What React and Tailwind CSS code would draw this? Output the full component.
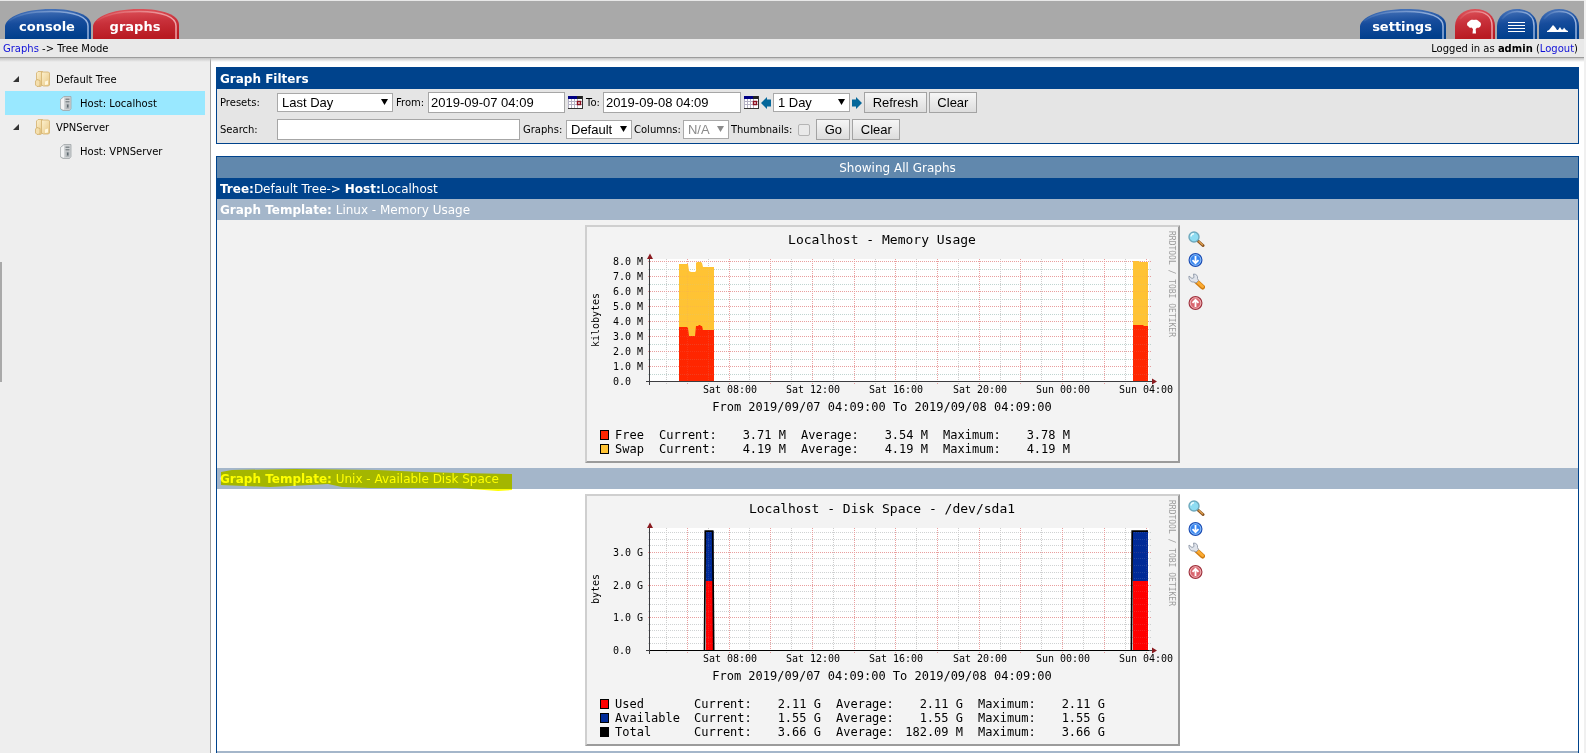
const TAB_COLORS = {
  blue: { top: "#4d78bc", mid: "#164c9c", bottom: "#003f8c", shine: "#a8c0e6" },
  red: { top: "#e0575e", mid: "#c8303a", bottom: "#b91b22", shine: "#f3b0b3" },
};

const tree = [
  { name: "Default Tree", hosts: [{ name: "Host: Localhost", active: true }] },
  { name: "VPNServer", hosts: [{ name: "Host: VPNServer", active: false }] },
];

const HOUR_LINES = Array.from({ length: 24 }, (_, i) => Math.round(81 + i * 20.85) + 0.5);

const TIME_LABELS = [
  { x: 145, text: "Sat 08:00" },
  { x: 228, text: "Sat 12:00" },
  { x: 311, text: "Sat 16:00" },
  { x: 395, text: "Sat 20:00" },
  { x: 478, text: "Sun 00:00" },
  { x: 561, text: "Sun 04:00" },
];

const memoryGraph = {
  title: "Localhost - Memory Usage",
  unit: "kilobytes",
  height: 238,
  step: 15,
  minor: 2,
  minorCount: 16,
  minorColor: "#b4cdc8",
  yLabels: ["0.0", "1.0 M", "2.0 M", "3.0 M", "4.0 M", "5.0 M", "6.0 M", "7.0 M", "8.0 M"],
  shift: 0,
  areas: [
    { color: "#ffc334", d: "M94 156V39h9l1 7 2 1h4l1-1V38l1-1h4l1 1 1 4h11v114z" },
    { color: "#ff2600", d: "M94 156v-54h8l1 1 1 8h6l1-10h2l1-1h1l1 1h1l1 4h11v51z" },
    { color: "#ffc334", d: "M548 156V36h6l1 1h8v119z" },
    { color: "#ff2600", d: "M548 156v-56h10l1 1h4v55z" },
  ],
  legend: [
    { color: "#ff2600", name: "Free", values: ["3.71 M", "3.54 M", "3.78 M"] },
    { color: "#ffc334", name: "Swap", values: ["4.19 M", "4.19 M", "4.19 M"] },
  ],
};

const diskGraph = {
  title: "Localhost - Disk Space - /dev/sda1",
  unit: "bytes",
  height: 252,
  step: 32.7,
  minor: 5,
  minorCount: 18,
  minorColor: "#c6cacb",
  yLabels: ["0.0", "1.0 G", "2.0 G", "3.0 G"],
  shift: 35,
  areas: [
    { color: "#002a97", d: "M120.5 87V37h8v50zM547.5 87V37h15.5v50z" },
    { color: "#ff0000", d: "M121 156V87h7v69zM548 156V87h15v69z" },
  ],
  line: "M119.5 156.5L120.3 37.2H127.7L128.700 156.5M546.400 156.5L547.2 37.2H563",
  legend: [
    { color: "#ff0000", name: "Used", values: ["2.11 G", "2.11 G", "2.11 G"] },
    { color: "#002a97", name: "Available", values: ["1.55 G", "1.55 G", "1.55 G"] },
    { color: "#000000", name: "Total", values: ["3.66 G", "182.09 M", "3.66 G"] },
  ],
};

function TabShape({ color, width }) {
  const c = TAB_COLORS[color];
  const id = `tab-${color}-${width}`;
  const wide = width > 50;
  const outline = wide
    ? "M0 30V17C1 9 17 0 46 0C70 0 86 6 86 16V30Z"
    : "M0 30V17C0 7 9 0 20 0C32 0 40 7 40 17V30Z";
  const shine = wide
    ? "M4 12C14 4 30 2.5 46 2.5C70 2.5 83 8 83 17V30"
    : "M5 10C9 5 14 2.5 20 2.5C31 2.5 37 8 37 17V30";

  return (
    <svg className="absolute inset-0" width={width} height="30" aria-hidden="true">
      <defs>
        <linearGradient id={id} x1="0" y1="0" x2="0.15" y2="1">
          <stop offset="0" stopColor={c.top} />
          <stop offset="0.5" stopColor={c.mid} />
          <stop offset="1" stopColor={c.bottom} />
        </linearGradient>
        <linearGradient id={`${id}-shine`} x1="0" y1="0" x2="1" y2="0">
          <stop offset="0" stopColor={c.shine} stopOpacity="0.1" />
          <stop offset="0.6" stopColor={c.shine} stopOpacity="0.6" />
          <stop offset="1" stopColor={c.shine} stopOpacity="0.9" />
        </linearGradient>
      </defs>
      <path d={outline} fill={`url(#${id})`} />
      <path d={shine} fill="none" stroke={`url(#${id}-shine)`} strokeWidth="1.5" />
    </svg>
  );
}

function Tab({ color, children }) {
  return (
    <a href="#" className="relative block h-[30px] w-[86px]">
      <TabShape color={color} width={86} />
      <span className="relative block pt-[8px] pr-[2px] text-center text-[13px] leading-[20px] font-bold text-white">
        {children}
      </span>
    </a>
  );
}

function IconTab({ color, label, children }) {
  return (
    <a href="#" aria-label={label} className="relative block h-[30px] w-[40px]">
      <TabShape color={color} width={40} />
      <svg className="absolute inset-0" width="40" height="30" fill="#fff" aria-hidden="true">
        {children}
      </svg>
    </a>
  );
}

function FolderIcon() {
  return (
    <svg width="16" height="16" viewBox="0 0 16 16" aria-hidden="true">
      <defs>
        <linearGradient id="folder" x1="0" y1="0" x2="1" y2="1">
          <stop offset="0" stopColor="#fdf1cf" />
          <stop offset="1" stopColor="#e8c885" />
        </linearGradient>
      </defs>
      <path d="M1.5 2L3 .5h4.5V14l-2 1.5-4-1z" fill="url(#folder)" stroke="#d3b06c" strokeWidth="0.8" />
      <path d="M6.5 1h7l1 1v12l-1 1h-5l-2-1z" fill="url(#folder)" stroke="#d3b06c" strokeWidth="0.8" />
      <path d="M.5 10l1.5-1.500 3 1V15l-3 .5L.5 14z" fill="#f4dfae" stroke="#cfa95f" strokeWidth="0.7" />
      <path d="M10 10.500l3-1v4l-3 .5z" fill="#fff7df" />
    </svg>
  );
}

function ServerIcon() {
  return (
    <svg width="12" height="15" viewBox="0 0 12 15" aria-hidden="true">
      <path d="M.5 3.500L4 .5h7v12L9.500 14.500H3L.5 13z" fill="#d0d3d5" stroke="#a0a4a7" strokeWidth="0.8" />
      <path d="M.8 3.700L4 1.200v12.600L.8 12.500z" fill="#f3f4f5" />
      <path d="M5.500 2.500h4v1.500h-4zM5.500 5h4v1.500h-4z" fill="#838a8e" />
      <path d="M5.500 7.500h4v5.500h-4z" fill="#b2b7ba" />
      <path d="M7 8.500h1.500v3H7z" fill="#5e6a70" />
    </svg>
  );
}

function CalendarIcon() {
  return (
    <svg width="15" height="13" viewBox="0 0 15 13" aria-hidden="true">
      <path d="M0 0h14v12H0z" fill="#fff" />
      <path d="M0 0h9v3H0z" fill="#000084" />
      <path d="M9 0h6v3H9z" fill="#222" />
      <path d="M.5 3v9M0 5.500h14M0 8.500h14M3.500 3v9M6.500 3v9M9.500 3v9" stroke="#b5b2c4" fill="none" />
      <path d="M9.500 5.500h3v3h-3z" fill="#fff" stroke="#8c1020" strokeWidth="1.400" />
      <path d="M14.500 0v13M0 12.500h15" stroke="#333" fill="none" />
    </svg>
  );
}

function ShiftArrow({ right }) {
  return (
    <svg width="10" height="12" viewBox="0 0 10 12" aria-hidden="true">
      <path
        d={right ? "M0 2.500h4V0l6 6-6 6V9.500H0z" : "M10 2.500H6V0L0 6l6 6V9.500h4z"}
        fill="#04679a"
      />
    </svg>
  );
}

function Select({ id, label, options, className, disabled }) {
  return (
    <span className={`relative block ${className}`}>
      <select
        id={id}
        aria-label={label}
        disabled={disabled}
        className={`block h-[19px] w-full appearance-none border border-[#a9a9a9] bg-white pl-[4px] font-['Liberation_Sans',sans-serif] text-[13px] leading-[17px] ${disabled ? "text-[#8a8a8a]" : "text-black"}`}
      >
        {options.map((option) => (
          <option key={option}>{option}</option>
        ))}
      </select>
      <svg
        className="pointer-events-none absolute top-[6px] right-[5px]"
        width="7"
        height="6"
        aria-hidden="true"
      >
        <path d="M0 0h7L3.500 6z" fill={disabled ? "#8a8a8a" : "#000"} />
      </svg>
    </span>
  );
}

function TextInput({ id, value, className }) {
  return (
    <input
      id={id}
      type="text"
      defaultValue={value}
      className={`h-[21px] border border-[#a6a6a6] bg-white px-[2px] font-['Liberation_Sans',sans-serif] text-[13px] text-black ${className}`}
    />
  );
}

function Button({ className, children }) {
  return (
    <button
      type="button"
      className={`h-[21px] border border-[#a3a3a3] bg-linear-to-b from-[#f6f6f6] to-[#dddddd] text-center font-['Liberation_Sans',sans-serif] text-[13px] leading-[18px] text-black ${className}`}
    >
      {children}
    </button>
  );
}

function GraphFilters() {
  return (
    <form className="border border-[#00438c] bg-[#e5e5e5]" onSubmit={(e) => e.preventDefault()}>
      <h2 className="h-[21px] bg-[#00438c] px-[3px] text-[12px] leading-[22px] font-bold text-white">
        Graph Filters
      </h2>
      <div className="flex h-[27px] items-center gap-[3px] pl-[3px] text-[10px]">
        <label htmlFor="preset" className="w-[54px]">Presets:</label>
        <Select id="preset" options={["Last Day"]} className="w-[116px]" />
        <label htmlFor="from" className="w-[29px]">From:</label>
        <TextInput id="from" value="2019-09-07 04:09" className="w-[137px]" />
        <CalendarIcon />
        <label htmlFor="to">To:</label>
        <TextInput id="to" value="2019-09-08 04:09" className="w-[138px]" />
        <div className="flex items-center gap-[2px]">
          <CalendarIcon />
          <ShiftArrow />
          <Select id="span" label="Timespan" options={["1 Day"]} className="w-[77px]" />
          <ShiftArrow right />
          <Button className="w-[63px]">Refresh</Button>
          <Button className="w-[48px]">Clear</Button>
        </div>
      </div>
      <div className="flex h-[27px] items-center gap-[3px] pl-[3px] text-[10px]">
        <label htmlFor="search" className="w-[54px]">Search:</label>
        <TextInput id="search" value="" className="w-[243px]" />
        <div className="flex items-center gap-[2px]">
          <label htmlFor="graphs" className="w-[41px]">Graphs:</label>
          <Select id="graphs" options={["Default"]} className="w-[66px]" />
          <label htmlFor="columns">Columns:</label>
          <Select id="columns" options={["N/A"]} className="w-[46px]" disabled />
          <label htmlFor="thumbnails">Thumbnails:</label>
          <input
            id="thumbnails"
            type="checkbox"
            className="mx-[4px] size-[12px] appearance-none rounded-[2px] border border-[#b4b4b4] bg-[#e9e9e9]"
          />
          <Button className="w-[34px]">Go</Button>
          <Button className="w-[48px]">Clear</Button>
        </div>
      </div>
    </form>
  );
}

function Grid({ graph, opacity }) {
  const minorLines = [];
  for (let i = 1; i <= graph.minorCount; i += 1) {
    if (i % graph.minor !== 0) {
      minorLines.push(Math.round(156 - (i * graph.step) / graph.minor) + 0.5);
    }
  }

  return (
    <g opacity={opacity} strokeDasharray="1 1">
      {minorLines.map((y) => (
        <path key={y} d={`M63 ${y}H567`} stroke={graph.minorColor} />
      ))}
      {HOUR_LINES.map((x, i) => (
        <path key={x} d={`M${x} 34V159`} stroke={i % 2 ? "#e58c8c" : "#c4c4c4"} />
      ))}
      {graph.yLabels.map((label, i) => (
        <path
          key={label}
          d={`M63 ${Math.round(156 - i * graph.step) + 0.5}H567`}
          stroke="#e58c8c"
        />
      ))}
    </g>
  );
}

function Graph({ graph }) {
  const { shift, height } = graph;

  return (
    <svg
      width="595"
      height={height}
      viewBox={`0 0 595 ${height}`}
      role="img"
      aria-label={graph.title}
      className="block shrink-0 font-['DejaVu_Sans_Mono',monospace]"
    >
      <rect width="595" height={height} fill="#f3f3f3" />
      <path d={`M0 0H595L593 2H2V${height - 2}L0 ${height}Z`} fill="#cfcfcf" />
      <path d={`M595 0V${height}H0L2 ${height - 2}H593V2Z`} fill="#9b9b9b" />
      <rect x="65" y="34" width="499" height="123" fill="#fff" />

      <Grid graph={graph} opacity="0.8" />
      {graph.areas.map((area) => (
        <path key={area.d} d={area.d} fill={area.color} />
      ))}
      <Grid graph={graph} opacity="0.15" />

      <path d="M61 156.500H569M64.500 160V32" stroke="#3c3c40" fill="none" />
      {graph.line ? (
        <>
          <path d="M65 156.500H564" stroke="#000" />
          <path d={graph.line} fill="none" stroke="#000" strokeWidth="1.700" />
        </>
      ) : null}
      <path d="M62 34L65 28.500L68 34ZM567 153.500L572 156.500L567 159.500Z" fill="#8a1b20" />

      {graph.yLabels.map((label, i) => (
        <text key={label} x="28" y={Math.round(156 - i * graph.step) + 4} fontSize="10">
          {label}
        </text>
      ))}
      <text x="297" y="19" fontSize="13" textAnchor="middle">{graph.title}</text>
      <text transform="translate(14 95) rotate(-90)" fontSize="10" textAnchor="middle">{graph.unit}</text>
      <text transform="translate(584 6) rotate(90)" fontSize="8" fill="#9c9c9c">RRDTOOL / TOBI OETIKER</text>
      {TIME_LABELS.map((label) => (
        <text key={label.text} x={label.x} y="168" fontSize="10" textAnchor="middle">{label.text}</text>
      ))}
      <text x="297" y="186" fontSize="12" textAnchor="middle">
        From 2019/09/07 04:09:00 To 2019/09/08 04:09:00
      </text>

      {graph.legend.map((row, i) => {
        const y = 214 + i * 14;
        return (
          <g key={row.name} fontSize="12">
            <rect x="15.5" y={y - 8.5} width="8" height="9" fill={row.color} stroke="#000" />
            <text x="30" y={y}>{row.name}</text>
            <text x={74 + shift} y={y}>Current:</text>
            <text x={201 + shift} y={y} textAnchor="end">{row.values[0]}</text>
            <text x={216 + shift} y={y}>Average:</text>
            <text x={343 + shift} y={y} textAnchor="end">{row.values[1]}</text>
            <text x={358 + shift} y={y}>Maximum:</text>
            <text x={485 + shift} y={y} textAnchor="end">{row.values[2]}</text>
          </g>
        );
      })}
    </svg>
  );
}

function GraphActions() {
  return (
    <div className="flex flex-col gap-[5px] pt-[6px]">
      <a href="#" aria-label="Zoom Graph">
        <svg width="17" height="16" viewBox="0 0 17 16" aria-hidden="true">
          <path d="M10 10l5 4.500" stroke="#8a5420" strokeWidth="3" strokeLinecap="round" />
          <path d="M11 10.500l3.500 3.200" stroke="#e0a050" strokeWidth="1.300" strokeLinecap="round" />
          <circle cx="6" cy="6" r="5" fill="#8edcf2" stroke="#6fa9bd" strokeWidth="1.400" />
          <path d="M3 5.500a3 3 0 0 1 3-2.800" stroke="#e9fbff" strokeWidth="1.400" fill="none" />
        </svg>
      </a>
      <a href="#" aria-label="CSV Export">
        <svg width="16" height="16" viewBox="0 0 16 16" aria-hidden="true">
          <circle cx="7.500" cy="8" r="6.400" fill="#3583ee" stroke="#1f4fb4" strokeWidth="1.200" />
          <circle cx="7.500" cy="8" r="5.300" fill="none" stroke="#a5cffc" strokeWidth="0.800" />
          <path d="M7.500 4v7M4.500 8.200l3 3 3-3" stroke="#fff" strokeWidth="1.800" fill="none" />
        </svg>
      </a>
      <a href="#" aria-label="Graph Source/Properties">
        <svg width="17" height="17" viewBox="0 0 17 17" aria-hidden="true">
          <path d="M9 9l5.500 5" stroke="#d07c12" strokeWidth="5" strokeLinecap="round" />
          <path d="M9 8.500l5.500 5" stroke="#fbab32" strokeWidth="3" strokeLinecap="round" />
          <path
            d="M1 3l3 2.500L6 4.500 5.500 1C8.500 1 10 3 9.500 5.500L10.500 7.500 8 10 6 9C3 9.500 0.500 7 1 3z"
            fill="#dfe3ea"
            stroke="#8f98a8"
            strokeWidth="0.900"
          />
        </svg>
      </a>
      <a href="#" aria-label="Page Top">
        <svg width="16" height="16" viewBox="0 0 16 16" aria-hidden="true">
          <circle cx="7.500" cy="8" r="6.400" fill="#d9656e" stroke="#a03540" strokeWidth="1.200" />
          <circle cx="7.500" cy="8" r="5.300" fill="none" stroke="#f4c6ca" strokeWidth="0.800" />
          <path d="M7.500 12V5M4.500 7.800l3-3 3 3" stroke="#fff" strokeWidth="1.800" fill="none" />
        </svg>
      </a>
    </div>
  );
}

function TemplateHeader({ name, marked }) {
  return (
    <h3 className="relative h-[21px] bg-[#a4b6ca] px-[3px] text-[12px] leading-[22px] text-white">
      <span className="font-bold">Graph Template:</span> {name}
      {marked ? (
        <svg
          className="pointer-events-none absolute top-0 left-[3px] z-10 mix-blend-multiply"
          width="294"
          height="24"
          aria-hidden="true"
        >
          <path
            d="M1 4L12 2 75 1 157 2 203 4 240 5 292 6V22L278 23 237 20 150 20 122 19 108 16 90 17 50 19 1 17Z"
            fill="#ffff00"
          />
        </svg>
      ) : null}
    </h3>
  );
}

function GraphRow({ graph, className }) {
  return (
    <div className={`flex justify-center gap-[8px] pt-[5px] pr-[6px] pb-[5px] ${className}`}>
      <Graph graph={graph} />
      <GraphActions />
    </div>
  );
}

function Sidebar() {
  return (
    <nav className="relative w-[211px] shrink-0 border-r border-[#a0a0a0] bg-[#eeeeee] pt-[9px] pr-[5px] pl-[5px] text-[10px]">
      <ul>
        {tree.map((branch) => (
          <li key={branch.name}>
            <a href="#" className="flex h-[24px] items-center pl-[8px]">
              <svg width="6" height="6" aria-hidden="true">
                <path d="M6 0V6H0z" fill="#333" />
              </svg>
              <span className="ml-[16px]"><FolderIcon /></span>
              <span className="ml-[5px]">{branch.name}</span>
            </a>
            <ul>
              {branch.hosts.map((host) => (
                <li key={host.name}>
                  <a
                    href="#"
                    className={`flex h-[24px] items-center pl-[55px] ${host.active ? "bg-[#99e8ff]" : ""}`}
                  >
                    <ServerIcon />
                    <span className="ml-[8px]">{host.name}</span>
                  </a>
                </li>
              ))}
            </ul>
          </li>
        ))}
      </ul>
      <div className="absolute top-[204px] left-0 h-[120px] w-[2px] bg-[#a9a9a9]" />
    </nav>
  );
}

function App() {
  return (
    <div className="flex min-h-screen flex-col border-r-2 border-[#f0f0f0] bg-white font-[Verdana,'DejaVu_Sans',sans-serif] text-black">
      <header className="flex h-[39px] items-end justify-between border-t border-[#e8e8e8] bg-[#a9a9a9] pr-[5px] pl-[5px]">
        <div className="flex gap-[2px]">
          <Tab color="blue">console</Tab>
          <Tab color="red">graphs</Tab>
        </div>
        <div className="flex gap-[2px]">
          <Tab color="blue">settings</Tab>
          <span className="w-[5px]" />
          <IconTab color="red" label="Tree View">
            <path d="M14 12.500c1-1.500 3-2 5-1.500 2-.7 4 0 5 1.500 2 .8 2.500 3 1.500 4.500-.5 1.500-2 2-3.500 1.700l-1.300 1.300.3 4.500h-3.500l.5-4.500-1.500-1.500c-1.500.7-3 0-3-1.200-2-.6-2-3.800.5-4.800z" />
          </IconTab>
          <IconTab color="blue" label="List View">
            <path d="M11 13h17v1H11zM11 16h17v1H11zM11 19h17v1H11zM11 22h17v1H11z" />
          </IconTab>
          <IconTab color="blue" label="Preview View">
            <path d="M8 23v-1l2-1 4-5 2 2 2 3h1l2-3 1.500 2.500H24l1-2 2 2.500 2 1v1z" />
          </IconTab>
        </div>
      </header>

      <div className="flex h-[19px] items-center justify-between border-b border-[#9c9c9c] bg-[#e9e9e9] px-[3px] text-[10px]">
        <div>
          <a href="#" className="text-[#1010d8]">Graphs</a> -&gt; Tree Mode
        </div>
        <div className="pr-[3px]">
          Logged in as <b>admin</b> (<a href="#" className="text-[#1010d8]">Logout</a>)
        </div>
      </div>

      <div className="relative flex grow">
        <div className="pointer-events-none absolute inset-x-0 top-0 z-10 h-[4px] bg-linear-to-b from-[#c4c4c4] to-transparent" />
        <Sidebar />
        <main className="flex min-w-0 grow flex-col pt-[9px] pr-[5px] pl-[5px]">
          <GraphFilters />
          <section className="mt-[12px] grow border-x border-t border-[#00438c]">
            <h2 className="h-[21px] bg-[#6188ad] text-center text-[12px] leading-[22px] text-white">
              Showing All Graphs
            </h2>
            <div className="h-[21px] bg-[#00438c] px-[3px] text-[12px] leading-[22px] text-white">
              <b>Tree:</b>Default Tree-&gt; <b>Host:</b>Localhost
            </div>
            <TemplateHeader name="Linux - Memory Usage" />
            <GraphRow graph={memoryGraph} className="bg-[#f2f2f2]" />
            <TemplateHeader name="Unix - Available Disk Space" marked />
            <GraphRow graph={diskGraph} className="bg-white" />
            <div className="h-[2px] bg-[#a4b6ca]" />
          </section>
        </main>
      </div>
    </div>
  );
}

export default App;
